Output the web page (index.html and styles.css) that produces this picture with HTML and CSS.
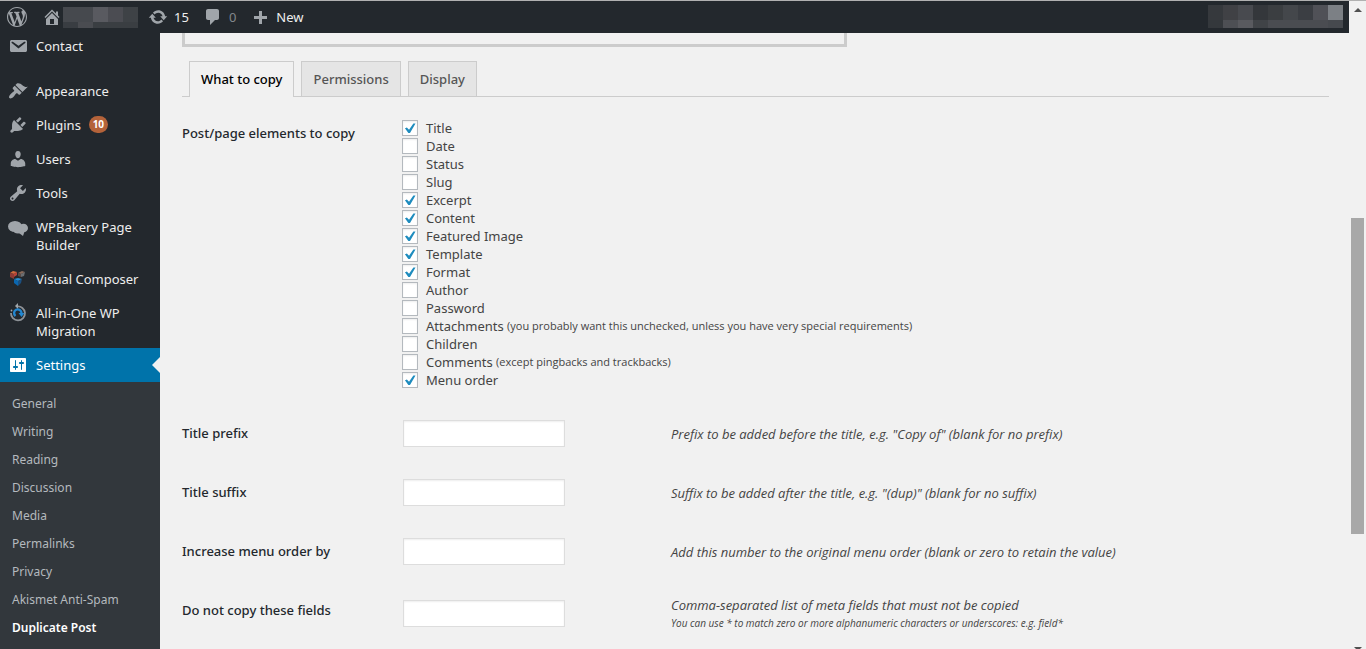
FILE: index.html
```html
<!DOCTYPE html>
<html lang="en">
<head>
  <meta charset="UTF-8">
  <meta name="viewport" content="width=device-width, initial-scale=1.0">
  <title>Duplicate Post Options</title>
  <link rel="stylesheet" href="styles.css">
</head>
<body>
  <div class="page">
    <header class="adminbar">
      <a class="bar-item" href="#" aria-label="About WordPress">
        <svg class="icon" viewBox="0 0 20 20"><path d="M20 10c0-5.51-4.49-10-10-10C4.48 0 0 4.49 0 10c0 5.52 4.48 10 10 10 5.51 0 10-4.48 10-10zM7.78 15.37L4.37 6.22c.55-.02 1.17-.08 1.17-.08.5-.06.44-1.13-.06-1.11 0 0-1.45.11-2.37.11-.18 0-.37 0-.58-.01C4.12 2.69 6.87 1.11 10 1.11c2.33 0 4.45.87 6.05 2.34-.68-.11-1.65.39-1.65 1.58 0 .74.45 1.36.9 2.1.35.61.55 1.36.55 2.46 0 1.49-1.4 5-1.4 5l-3.03-8.37c.54-.02.82-.17.82-.17.5-.05.44-1.25-.06-1.22 0 0-1.44.12-2.38.12-.87 0-2.33-.12-2.33-.12-.5-.03-.56 1.2-.06 1.22l.92.08 1.26 3.41zM17.41 10c.24-.64.74-1.87.43-4.25.7 1.29 1.05 2.71 1.05 4.25 0 3.29-1.73 6.24-4.4 7.78.97-2.59 1.94-5.2 2.92-7.78zM6.1 18.09C3.12 16.65 1.11 13.53 1.11 10c0-1.3.23-2.48.72-3.59C3.25 10.3 4.67 14.2 6.1 18.09zm4.03-6.63l2.58 6.98c-.86.29-1.76.45-2.71.45-.79 0-1.57-.11-2.29-.33.81-2.38 1.62-4.74 2.42-7.1z"/></svg>
      </a>
      <a class="bar-item site" href="#" aria-label="Visit site">
        <svg class="icon" viewBox="0 0 20 20"><path d="M16 8.5l1.53 1.53-1.06 1.06L10 4.6l-6.47 6.49-1.06-1.06L10 2.5l4 4v-2h2v4zm-6-2.46l6 5.99V18H4v-5.97zM12 17v-5H8v5h4z"/></svg>
        <svg class="site-name" viewBox="0 0 75 21" shape-rendering="crispEdges">
          <path fill="#46494e" d="M0 0h30v15H0z"/><path fill="#595a60" d="M30 0h15v15H30z"/><path fill="#4b4c52" d="M45 0h15v15H45z"/><path fill="#3e4246" d="M60 0h15v15H60z"/>
          <path fill="#393d42" d="M0 15h15v6H0z"/><path fill="#4a4c51" d="M15 15h15v6H15z"/><path fill="#3a3e42" d="M30 15h45v6H30z"/>
        </svg>
      </a>
      <a class="bar-item" href="#">
        <svg class="icon" viewBox="0 0 20 20"><path d="M10.2 3.28c3.53 0 6.43 2.61 6.92 6h2.08l-3.5 4-3.5-4h2.32c-.45-1.97-2.21-3.45-4.32-3.45-1.45 0-2.73.71-3.54 1.78L4.95 5.66C6.23 4.2 8.11 3.28 10.2 3.28zm-.4 13.44c-3.52 0-6.43-2.61-6.92-6H.8l3.5-4c1.17 1.33 2.33 2.67 3.5 4H5.48c.45 1.97 2.21 3.45 4.32 3.45 1.45 0 2.73-.71 3.54-1.78l1.71 1.95c-1.28 1.46-3.15 2.38-5.25 2.38z"/></svg>
        <span>15</span>
      </a>
      <a class="bar-item" href="#">
        <svg class="icon" viewBox="0 0 20 20"><path d="M5 2h9c1.1 0 2 .9 2 2v7c0 1.1-.9 2-2 2h-2l-5 5v-5H5c-1.1 0-2-.9-2-2V4c0-1.1.9-2 2-2z"/></svg>
        <span class="dim">0</span>
      </a>
      <a class="bar-item" href="#">
        <svg class="icon" viewBox="0 0 20 20"><path d="M17 9v3h-5v5H9v-5H4V9h5V4h3v5h5z"/></svg>
        <span>New</span>
      </a>
      <a class="bar-item account" href="#" aria-label="My account">
        <svg class="account-name" viewBox="0 0 135 23" shape-rendering="crispEdges">
          <path fill="#36393d" d="M0 0h15v15H0z"/><path fill="#404145" d="M15 0h15v15H15z"/><path fill="#484a4f" d="M30 0h15v15H30z"/><path fill="#34373b" d="M45 0h15v15H45z"/><path fill="#3b3e41" d="M60 0h15v15H60z"/><path fill="#44474b" d="M75 0h15v15H75z"/><path fill="#3b3e43" d="M90 0h15v15H90z"/><path fill="#505157" d="M105 0h15v15h-15z"/><path fill="#7c8085" d="M120 0h15v15h-15z"/>
          <path fill="#34383c" d="M0 15h15v8H0z"/><path fill="#4d4f54" d="M15 15h15v8H15z"/><path fill="#595a5f" d="M30 15h15v8H30z"/><path fill="#404347" d="M45 15h15v8H45z"/><path fill="#4a4c51" d="M60 15h60v8H60z"/><path fill="#46494e" d="M120 15h15v8h-15z"/>
        </svg>
      </a>
    </header>

    <div class="columns">
      <nav class="sidebar">
        <ul class="menu">
          <li><a href="#"><svg class="icon" viewBox="0 0 20 20"><path d="M3.87 4h13.25C18.37 4 19 4.59 19 5.79v8.42c0 1.19-.63 1.79-1.88 1.79H3.87c-1.25 0-1.88-.6-1.88-1.79V5.79c0-1.2.63-1.79 1.88-1.79zm6.62 8.6l6.74-5.53c.24-.2.43-.66.13-1.07-.29-.41-.82-.42-1.17-.17l-5.7 3.86L4.8 5.83c-.35-.25-.88-.24-1.17.17-.3.41-.11.87.13 1.07z"/></svg><span>Contact</span></a></li>
          <li class="separator"></li>
          <li><a href="#"><svg class="icon" viewBox="0 0 20 20"><path d="M14.48 11.06L7.41 3.99l1.5-1.5c.5-.56 2.3-.47 3.51.32 1.21.8 1.43 1.28 2.91 2.1 1.18.64 2.45 1.26 4.45.85zm-.71.71L6.7 4.7 4.93 6.47c-.39.39-.39 1.02 0 1.41l1.06 1.06c.39.39.39 1.03 0 1.42-.6.6-1.43 1.11-2.21 1.69-.35.26-.7.53-1.01.84C1.43 14.23.4 16.08 1.4 17.07c.99 1 2.84-.03 4.18-1.36.31-.31.58-.66.85-1.02.57-.78 1.08-1.61 1.69-2.21.39-.39 1.02-.39 1.41 0l1.06 1.06c.39.39 1.02.39 1.41 0z"/></svg><span>Appearance</span></a></li>
          <li><a href="#"><svg class="icon" viewBox="0 0 20 20"><path d="M13.11 4.36L9.87 7.6 8 5.73l3.24-3.24c.35-.34 1.05-.2 1.56.32.52.51.66 1.21.31 1.55zm-8 1.77l.91-1.12 9.01 9.01-1.19.84c-.71.71-2.63 1.16-3.82 1.16H6.14L4.9 17.26c-.59.59-1.54.59-2.12 0-.59-.58-.59-1.53 0-2.12l1.24-1.24v-3.88c0-1.13.4-3.19 1.09-3.89zm7.26 3.97l3.24-3.24c.34-.35 1.04-.21 1.55.31.52.51.66 1.21.31 1.55l-3.24 3.25z"/></svg><span>Plugins</span><b class="count">10</b></a></li>
          <li><a href="#"><svg class="icon" viewBox="0 0 20 20"><path d="M10 9.25c-2.27 0-2.73-3.44-2.73-3.44C7 4.02 7.82 2 9.97 2c2.16 0 2.98 2.02 2.71 3.81 0 0-.41 3.44-2.68 3.44zm0 2.57L12.72 10c2.39 0 4.52 2.33 4.52 4.53v2.49s-3.65 1.13-7.24 1.13c-3.65 0-7.24-1.13-7.24-1.13v-2.49c0-2.25 1.94-4.48 4.47-4.48z"/></svg><span>Users</span></a></li>
          <li><a href="#"><svg class="icon" viewBox="0 0 20 20"><path d="M16.68 9.77c-1.34 1.34-3.3 1.67-4.95.99l-5.41 6.52c-.99.99-2.59.99-3.58 0s-.99-2.59 0-3.57l6.52-5.42c-.68-1.65-.35-3.61.99-4.95 1.28-1.28 3.12-1.62 4.72-1.06l-2.89 2.89 2.82 2.82 2.86-2.87c.53 1.58.18 3.39-1.08 4.65zM3.81 16.21c.4.39 1.04.39 1.43 0 .4-.4.4-1.04 0-1.43-.39-.4-1.03-.4-1.43 0-.39.39-.39 1.03 0 1.43z"/></svg><span>Tools</span></a></li>
          <li><a href="#"><svg class="icon" viewBox="0 0 20 20"><ellipse cx="7" cy="9.500" rx="7" ry="5.500"/><ellipse cx="15.500" cy="11" rx="4.500" ry="4.300"/><ellipse cx="10" cy="13.500" rx="4.500" ry="3"/><path d="M11 13h6l-2 6-4-3z"/></svg><span>WPBakery Page Builder</span></a></li>
          <li><a href="#"><svg class="icon" viewBox="0 0 20 20"><path fill="#d26a3c" d="M2 4l3-2 4 1-3 2z"/><path fill="#8e3b35" d="M2 4l4 1v5L2 8z"/><path fill="#b8433a" d="M6 5l3-2v3L6 8z"/><path fill="#8b6b5a" d="M10 4l4-2 3 1-4 2z"/><path fill="#6b6e71" d="M13 5l4-2-1 4-3 1z"/><path fill="#5a4a45" d="M10 4l3 1v3l-3-1z"/><path fill="#2a8fd0" d="M6 10l4-1 4 1-4 2z"/><path fill="#0a67b0" d="M6 10l4 2v5l-4-3z"/><path fill="#1b4f80" d="M10 12l4-2-1 4-3 3z"/></svg><span>Visual Composer</span></a></li>
          <li><a href="#"><svg class="icon" viewBox="0 0 20 20"><path fill="none" stroke="#8d9297" stroke-width="1.800" d="M9 3.500a7 7 0 1 1-6 6.500"/><path d="M10 0v6L7 3z"/><circle cx="3.500" cy="7.500" r=".9"/><path fill="none" stroke="#2387d0" stroke-width="2.400" d="M7.500 13a3.700 3.700 0 1 1 6-3"/><path fill="#2387d0" d="M10.500 10h6l-3 4z"/></svg><span>All-in-One WP Migration</span></a></li>
          <li class="current"><a href="#"><svg class="icon" viewBox="0 0 20 20"><path d="M18 16V4c0-.55-.45-1-1-1H3c-.55 0-1 .45-1 1v12c0 .55.45 1 1 1h14c.55 0 1-.45 1-1zM8 11h1c.55 0 1 .45 1 1s-.45 1-1 1H8v1.500c0 .28-.22.5-.5.5s-.5-.22-.5-.5V13H6c-.55 0-1-.45-1-1s.45-1 1-1h1V5.500c0-.28.22-.5.5-.5s.5.22.5.5V11zm5-2h-1c-.55 0-1-.45-1-1s.45-1 1-1h1V5.500c0-.28.22-.5.5-.5s.5.22.5.5V7h1c.55 0 1 .45 1 1s-.45 1-1 1h-1v5.500c0 .28-.22.5-.5.5s-.5-.22-.5-.5V9z"/></svg><span>Settings</span></a></li>
        </ul>
        <ul class="submenu">
          <li><a href="#">General</a></li>
          <li><a href="#">Writing</a></li>
          <li><a href="#">Reading</a></li>
          <li><a href="#">Discussion</a></li>
          <li><a href="#">Media</a></li>
          <li><a href="#">Permalinks</a></li>
          <li><a href="#">Privacy</a></li>
          <li><a href="#">Akismet Anti-Spam</a></li>
          <li><a href="#" class="active">Duplicate Post</a></li>
        </ul>
      </nav>

      <main class="content">
        <div class="notice"></div>
        <nav class="tabs">
          <a href="#" class="tab tab-active">What to copy</a>
          <a href="#" class="tab">Permissions</a>
          <a href="#" class="tab">Display</a>
        </nav>
        <form>
          <table class="form-table">
            <colgroup>
              <col class="col-label">
              <col class="col-field">
              <col>
            </colgroup>
            <tr>
              <th scope="row">Post/page elements to copy</th>
              <td colspan="2" class="options">
                <label><input type="checkbox" checked>Title</label>
                <label><input type="checkbox">Date</label>
                <label><input type="checkbox">Status</label>
                <label><input type="checkbox">Slug</label>
                <label><input type="checkbox" checked>Excerpt</label>
                <label><input type="checkbox" checked>Content</label>
                <label><input type="checkbox" checked>Featured Image</label>
                <label><input type="checkbox" checked>Template</label>
                <label><input type="checkbox" checked>Format</label>
                <label><input type="checkbox">Author</label>
                <label><input type="checkbox">Password</label>
                <label><input type="checkbox">Attachments&nbsp;<small>(you probably want this unchecked, unless you have very special requirements)</small></label>
                <label><input type="checkbox">Children</label>
                <label><input type="checkbox">Comments&nbsp;<small>(except pingbacks and trackbacks)</small></label>
                <label><input type="checkbox" checked>Menu order</label>
              </td>
            </tr>
            <tr class="row">
              <th scope="row"><label for="prefix">Title prefix</label></th>
              <td class="field"><input type="text" id="prefix"></td>
              <td class="description">Prefix to be added before the title, e.g. "Copy of" (blank for no prefix)</td>
            </tr>
            <tr class="row">
              <th scope="row"><label for="suffix">Title suffix</label></th>
              <td class="field"><input type="text" id="suffix"></td>
              <td class="description">Suffix to be added after the title, e.g. "(dup)" (blank for no suffix)</td>
            </tr>
            <tr class="row">
              <th scope="row"><label for="increase">Increase menu order by</label></th>
              <td class="field"><input type="text" id="increase"></td>
              <td class="description">Add this number to the original menu order (blank or zero to retain the value)</td>
            </tr>
            <tr class="row tall">
              <th scope="row"><label for="blacklist">Do not copy these fields</label></th>
              <td class="field"><input type="text" id="blacklist"></td>
              <td class="description">Comma-separated list of meta fields that must not be copied<small>You can use * to match zero or more alphanumeric characters or underscores: e.g. field*</small></td>
            </tr>
          </table>
        </form>
      </main>
    </div>
  </div>

  <div class="scrollbar">
    <span class="arrow-up"></span>
    <span class="track"><span class="thumb"></span></span>
    <span class="arrow-down"></span>
  </div>
</body>
</html>
```
FILE: styles.css
```css
* {
  box-sizing: border-box;
}
body {
  margin: 0;
  display: flex;
  height: 100vh;
  overflow: hidden;
  border-top: 1px solid #b1b1b1;
  background: #f1f1f1;
  color: #444;
  font-family: "Noto Sans", "Open Sans", sans-serif;
  font-size: 13px;
  line-height: 18px;
}
a {
  color: inherit;
  text-decoration: none;
}
ul {
  list-style: none;
  margin: 0;
  padding: 0;
}
.icon {
  width: 20px;
  height: 20px;
  flex: none;
  fill: #a0a5aa;
}
.page {
  flex: 1;
  display: flex;
  flex-direction: column;
}

/* top bar */
.adminbar {
  display: flex;
  flex: none;
  height: 32px;
  background: #23282d;
  color: #eee;
  z-index: 1;
}
.bar-item {
  display: flex;
  align-items: center;
  gap: 6px;
  padding: 0 7px;
}
.site {
  gap: 1px;
  padding: 0 3px 0 8px;
}
.site-name {
  width: 75px;
  height: 21px;
}
.dim {
  color: #82878c;
}
.account {
  margin-left: auto;
  padding: 3px 6px 5px;
}
.account-name {
  width: 135px;
  height: 23px;
}

/* side menu */
.columns {
  flex: 1;
  display: flex;
  min-height: 0;
}
.sidebar {
  flex: none;
  width: 160px;
  background: #23282d;
  color: #eee;
}
.menu {
  margin-top: -4px;
}
.menu a {
  display: flex;
  align-items: flex-start;
  gap: 8px;
  padding: 8px 6px 8px 8px;
}
.menu .icon {
  margin: -1px 0;
}
.separator {
  height: 11px;
}
.count {
  min-width: 19px;
  height: 17px;
  border-radius: 9px;
  background: #b4633a;
  color: #fff;
  font-size: 10px;
  line-height: 17px;
  text-align: center;
}
.current {
  position: relative;
  background: #0073aa;
  color: #fff;
}
.current .icon {
  fill: #fff;
}
.current::after {
  content: "";
  position: absolute;
  right: 0;
  top: 9px;
  border: 8px solid transparent;
  border-left: 0;
  border-right-color: #f1f1f1;
}
.submenu {
  padding: 8px 0 7px;
  background: #32373c;
  color: #b4b9be;
  font-size: 12px;
}
.submenu a {
  display: block;
  padding: 5px 12px;
}
.submenu .active {
  color: #fff;
  font-weight: 600;
}

/* options */
.content {
  flex: 1;
  padding: 0 20px 0 22px;
}
.notice {
  width: 58%;
  height: 14px;
  border: 3px solid #ccc;
  border-top: 0;
}
.tabs {
  display: flex;
  gap: 7px;
  margin-top: 14px;
  padding-left: 7px;
  border-bottom: 1px solid #ccc;
}
.tab {
  padding: 8px 11px;
  border: 1px solid #ccc;
  border-bottom: 0;
  background: #e5e5e5;
  color: #555;
  font-weight: 500;
}
.tab-active {
  margin-bottom: -1px;
  padding-bottom: 9px;
  background: #f1f1f1;
  color: #000;
}
.form-table {
  width: 100%;
  margin-top: 7px;
  border-collapse: collapse;
  table-layout: fixed;
}
.col-label {
  width: 220px;
}
.col-field {
  width: 269px;
}
.form-table th {
  padding: 20px 10px 20px 0;
  color: #23282d;
  font-weight: 500;
  text-align: left;
  vertical-align: top;
}
.form-table td {
  padding: 0;
}
.form-table .options {
  padding: 15px 0;
}
.form-table .field {
  padding-left: 1px;
}
.row {
  height: 59px;
}
.tall {
  height: 65px;
}
.options label {
  display: flex;
  align-items: center;
  height: 18px;
}
small {
  font-family: "Open Sans", sans-serif;
  font-size: 11px;
}
input[type="checkbox"] {
  appearance: none;
  width: 16px;
  height: 16px;
  margin: 0 8px 0 0;
  border: 1px solid #b4b9be;
  background: #fff;
  box-shadow: inset 0 1px 2px rgba(0,0,0,0.07);
}
input[type="checkbox"]:checked::before {
  content: "";
  display: block;
  width: 12px;
  height: 11px;
  margin: 2px 1px;
  background: #1e8cbe;
  clip-path: polygon(8% 48%, 24% 40%, 42% 62%, 78% 4%, 96% 4%, 50% 92%, 36% 92%);
}
input[type="text"] {
  display: block;
  width: 162px;
  height: 27px;
  border: 1px solid #ddd;
  background: #fff;
  box-shadow: inset 0 1px 2px rgba(0,0,0,0.07);
}
.description {
  font-family: "Open Sans", sans-serif;
  font-style: italic;
}
.description small {
  display: block;
  font-size: 10px;
}

/* window scrollbar */
.scrollbar {
  display: flex;
  flex-direction: column;
  align-items: center;
  flex: none;
  width: 17px;
  background: #f1f1f1;
}
.arrow-up,
.arrow-down {
  border: 4px solid transparent;
}
.arrow-up {
  margin-top: 3px;
  border-bottom-color: #505050;
}
.arrow-down {
  border-top-color: #505050;
  margin-bottom: -6px;
}
.track {
  flex: 1;
  display: flex;
  flex-direction: column;
  padding-top: 206px;
}
.thumb {
  width: 13px;
  height: 316px;
  background: #a8a8a8;
}
```
